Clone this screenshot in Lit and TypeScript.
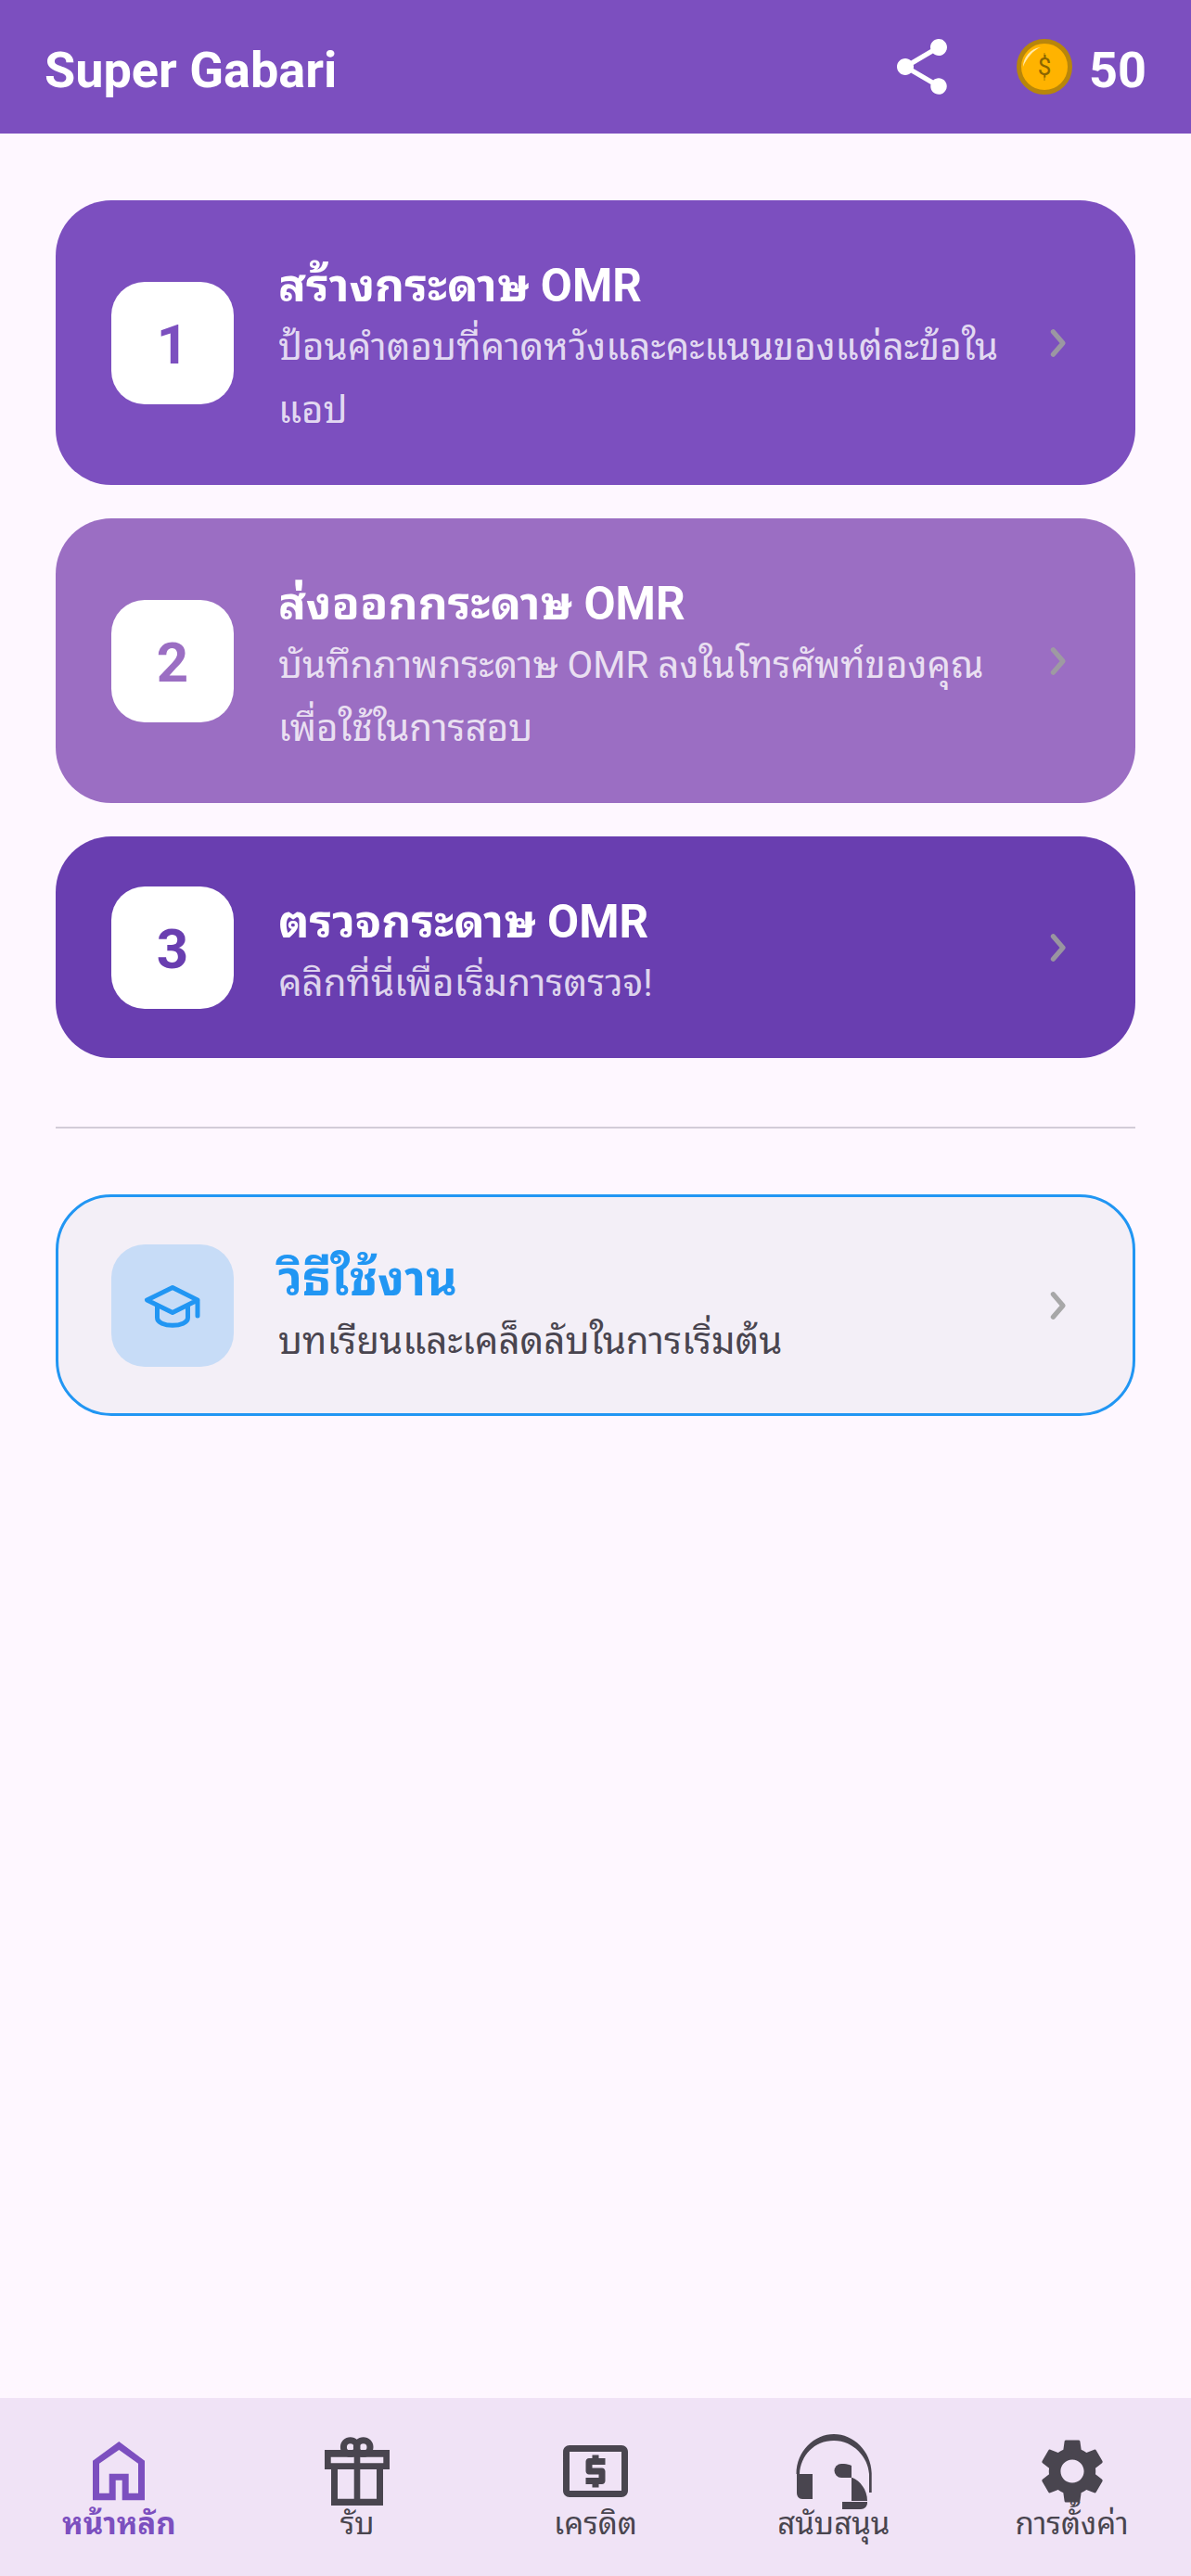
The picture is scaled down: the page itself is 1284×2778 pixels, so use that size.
import { LitElement, html, css, svg } from "lit";
import { customElement } from "lit/decorators.js";

const steps = [
  { n: "1", title: "สร้างกระดาษ OMR", sub: "ป้อนคำตอบที่คาดหวังและคะแนนของแต่ละข้อในแอป", cls: "c1" },
  { n: "2", title: "ส่งออกกระดาษ OMR", sub: "บันทึกภาพกระดาษ OMR ลงในโทรศัพท์ของคุณเพื่อใช้ในการสอบ", cls: "c2" },
  { n: "3", title: "ตรวจกระดาษ OMR", sub: "คลิกที่นี่เพื่อเริ่มการตรวจ!", cls: "c3" },
];

const chevron = html`<svg class="chev" viewBox="0 0 24 24"><path d="M9.7 5.9L15 12l-5.3 6.1" fill="none" stroke="currentColor" stroke-width="2.6" stroke-linecap="round" stroke-linejoin="round"/></svg>`;

const navIcons = [
  { w: 56, h: 64, body: svg`<path fill="currentColor" fill-rule="evenodd" d="M28.3 0L56 20.7V63.3H31.7V41.7H24.7V63.3H0V20.7zM7 23.7V55.7H17.7V34.7H38.7V55.7H49V23.7L28.3 9z"/>` },
  { w: 70, h: 74, body: svg`
    <circle cx="27.7" cy="11" r="7.3" fill="none" stroke="currentColor" stroke-width="7"/>
    <circle cx="41.7" cy="11" r="7.3" fill="none" stroke="currentColor" stroke-width="7"/>
    <path fill="currentColor" fill-rule="evenodd" d="M0 14H70V35H63V74H7V35H0zM6.7 21.7V28.3H31.7V21.7zM38.3 21.7V28.3H63.3V21.7zM14 35V66.7H31.7V35zM38.3 35V66.7H56V35z"/>` },
  { w: 84, h: 84, body: svg`<g transform="scale(3.5)"><path fill="currentColor" d="M11 17h2v-1h1c.55 0 1-.45 1-1v-3c0-.55-.45-1-1-1h-3v-1h4V8h-2V7h-2v1h-1c-.55 0-1 .45-1 1v3c0 .55.45 1 1 1h3v1H9v2h2v1zm9-13H4c-1.11 0-1.99.89-1.99 2L2 18c0 1.11.89 2 2 2h16c1.11 0 2-.89 2-2V6c0-1.11-.89-2-2-2zm0 14H4V6h16v12z"/></g>` },
  { w: 82, h: 81, body: svg`
    <path fill="currentColor" d="M.5 43C.5 18 20 0 41 0s40 18 40.7 42V63H79V43C78 25 62 7 41 7S5 23 4 43z"/>
    <path fill="currentColor" d="M1 43H18V70H7C3 70 1 67 1 63z"/>
    <path fill="currentColor" d="M49 32h3c3 0 6 1 8 2V47H49a7.5 7.5 0 0 1 0-15z"/>
    <path fill="currentColor" d="M60 47h1c8 3 16 13 16 25H60z"/>
    <path fill="currentColor" d="M50 73H77v1c0 4-3 7-7 7H50z"/>` },
  { w: 84, h: 84, body: svg`<g transform="scale(3.5)"><path fill="currentColor" d="M19.14 12.94c.04-.3.06-.61.06-.94 0-.32-.02-.64-.07-.94l2.03-1.58c.18-.14.23-.41.12-.61l-1.92-3.32c-.12-.22-.37-.29-.59-.22l-2.39.96c-.5-.38-1.03-.7-1.62-.94l-.36-2.54c-.04-.24-.24-.41-.48-.41h-3.84c-.24 0-.43.17-.47.41l-.36 2.54c-.59.24-1.13.57-1.62.94l-2.39-.96c-.22-.08-.47 0-.59.22L2.74 8.87c-.12.21-.08.47.12.61l2.03 1.58c-.05.3-.09.63-.09.94s.02.64.07.94l-2.03 1.58c-.18.14-.23.41-.12.61l1.92 3.32c.12.22.37.29.59.22l2.39-.96c.5.38 1.03.7 1.62.94l.36 2.54c.05.24.24.41.48.41h3.84c.24 0 .44-.17.47-.41l.36-2.54c.59-.24 1.13-.56 1.62-.94l2.39.96c.22.08.47 0 .59-.22l1.92-3.32c.12-.22.07-.47-.12-.61l-2.01-1.58zM12 15.6c-1.98 0-3.6-1.62-3.6-3.6s1.62-3.6 3.6-3.6 3.6 1.62 3.6 3.6-1.62 3.6-3.6 3.6z"/></g>` },
];
const navLabels = ["หน้าหลัก", "รับ", "เครดิต", "สนับสนุน", "การตั้งค่า"];

@customElement("app-root")
export class AppRoot extends LitElement {
  static styles = css`
    :host {
      display: flex;
      flex-direction: column;
      height: 2778px;
      background: #fef7ff;
      font-family: Roboto, "Noto Sans Thai Looped", "Noto Sans Thai", "Noto Sans", sans-serif;
    }
    .top {
      height: 144px;
      flex: none;
      box-sizing: border-box;
      background: #7c4fbf;
      color: #fff;
      display: flex;
      align-items: center;
      padding: 0 48px;
    }
    .brand { font-size: 54px; font-weight: 700; flex: 1; padding-top: 6px; }
    .share { width: 72px; height: 72px; margin-right: 66px; }
    .coin { width: 60px; height: 60px; margin-right: 18px; }
    .score { font-size: 54px; font-weight: 700; padding-top: 6px; }
    main {
      flex: 1;
      padding: 72px 60px 0;
      display: flex;
      flex-direction: column;
    }
    .card {
      display: flex;
      align-items: center;
      border-radius: 60px;
      padding: 46px 60px;
      box-sizing: border-box;
      color: #fff;
      margin-bottom: 36px;
    }
    .c1 { background: #7c4fbf; }
    .c2 { background: #9b6ec3; }
    .c3 { background: #693eb0; }
    .badge {
      width: 132px;
      height: 132px;
      flex: none;
      box-sizing: border-box;
      padding-top: 3px;
      background: #fff;
      border-radius: 36px;
      display: flex;
      align-items: center;
      justify-content: center;
      font-size: 60px;
      font-weight: 700;
      margin-right: 48px;
    }
    .c1 .badge { color: #7c4fbf; }
    .c2 .badge { color: #9b6ec3; }
    .c3 .badge { color: #693eb0; }
    .body { flex: 1; min-width: 0; padding-top: 13px; }
    .title { font-size: 49.5px; font-weight: 700; line-height: 66px; }
    .sub { font-size: 40.3px; line-height: 68px; color: rgba(255, 255, 255, 0.8); }
    .chev { width: 48px; height: 48px; flex: none; margin-left: 24px; color: rgba(158, 158, 158, 0.9); }
    .rule { height: 2px; background: #d2ccd8; margin: 38px 0 71px; }
    .help { background: #f3eff7; border: 3px solid #2196f3; color: #49454f; padding: 43px 57px; }
    .help .badge { background: #c7dcf7; padding-top: 0; }
    .help .title { color: #2196f3; font-size: 52px; }
    .help .sub { color: #49454f; }
    .cap { width: 72px; height: 72px; }
    nav {
      height: 192px;
      flex: none;
      background: #f0e3f6;
      display: grid;
      grid-template-columns: repeat(5, 1fr);
      color: #49454f;
    }
    .tab {
      display: flex;
      flex-direction: column;
      align-items: center;
      font-size: 33px;
      line-height: 30px;
    }
    .slot { height: 84px; margin-top: 37px; display: flex; align-items: center; justify-content: center; }
    .tab.on { color: #7c4fbf; font-weight: 700; }
  `;

  render() {
    return html`
      <header class="top">
        <div class="brand">Super Gabari</div>
        <svg class="share" viewBox="0 0 24 24"><path fill="#fff" d="M18 16.08c-.76 0-1.44.3-1.96.77L8.91 12.7c.05-.23.09-.46.09-.7s-.04-.47-.09-.7l7.05-4.11c.54.5 1.25.81 2.04.81 1.66 0 3-1.34 3-3s-1.34-3-3-3-3 1.34-3 3c0 .24.04.47.09.7L8.04 9.81C7.5 9.31 6.79 9 6 9c-1.66 0-3 1.34-3 3s1.34 3 3 3c.79 0 1.5-.31 2.04-.81l7.12 4.16c-.05.21-.08.43-.08.65 0 1.61 1.31 2.92 2.92 2.92s2.92-1.31 2.92-2.92-1.31-2.92-2.92-2.92z"/></svg>
        <svg class="coin" viewBox="0 0 60 60">
          <circle cx="30" cy="30" r="27.5" fill="#ffb300" stroke="#b8860b" stroke-width="5"/>
          <path d="M7 30c0-10 8-20 19-21-8 3-15 11-19 21z" fill="#ffe9a8"/>
          <path d="M30 15v4M30 41v4" stroke="#a67c00" stroke-width="1"/>
          <text x="30" y="39" text-anchor="middle" font-size="26" fill="#8a6500" font-family="Roboto">$</text>
        </svg>
        <div class="score">50</div>
      </header>
      <main>
        ${steps.map(s => html`
          <div class="card ${s.cls}">
            <div class="badge">${s.n}</div>
            <div class="body">
              <div class="title">${s.title}</div>
              <div class="sub">${s.sub}</div>
            </div>
            ${chevron}
          </div>`)}
        <div class="rule"></div>
        <div class="card help">
          <div class="badge">
            <svg class="cap" viewBox="0 0 72 72" fill="none" stroke="#2196f3" stroke-width="5" stroke-linejoin="round" stroke-linecap="round">
              <path d="M36 16.5L8.5 30 36 43.5 63 30zM63 30v17M19.5 36v13c0 11 33 11 33 0V36"/>
            </svg>
          </div>
          <div class="body">
            <div class="title">วิธีใช้งาน</div>
            <div class="sub">บทเรียนและเคล็ดลับในการเริ่มต้น</div>
          </div>
          ${chevron}
        </div>
      </main>
      <nav>
        ${navLabels.map((l, i) => html`
          <div class="tab ${i === 0 ? "on" : ""}">
            <div class="slot">
              <svg width=${navIcons[i].w} height=${navIcons[i].h} viewBox="0 0 ${navIcons[i].w} ${navIcons[i].h}">${navIcons[i].body}</svg>
            </div>
            <div>${l}</div>
          </div>`)}
      </nav>
    `;
  }
}
